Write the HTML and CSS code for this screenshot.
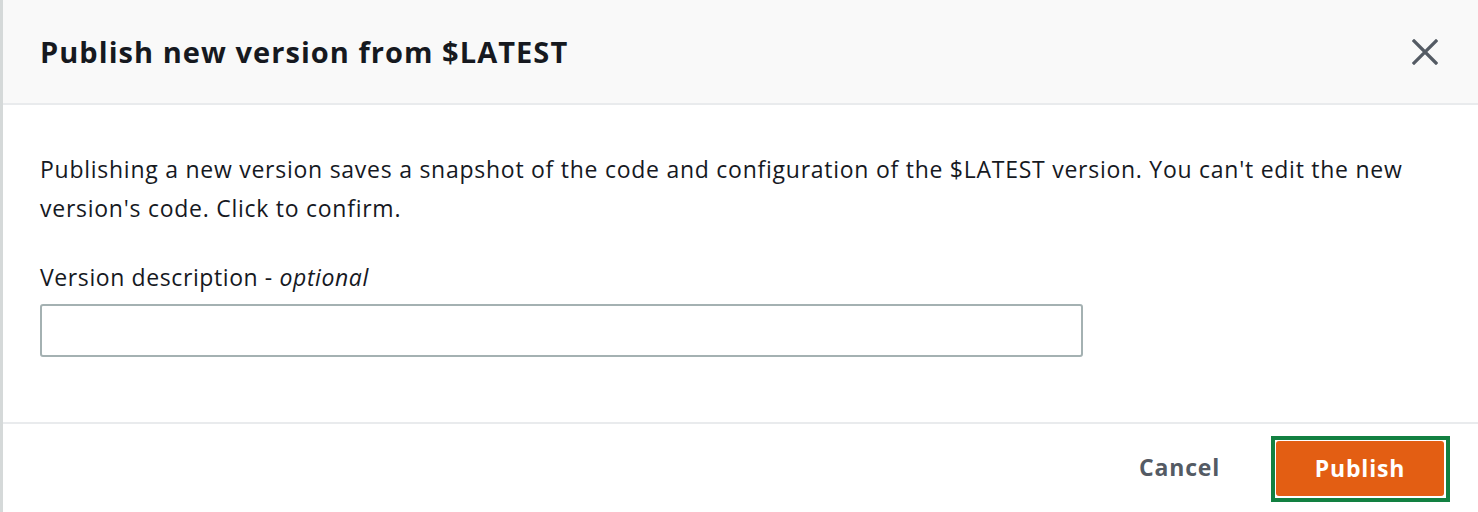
FILE: index.html
```html
<!DOCTYPE html>
<html lang="en">
<head>
<meta charset="utf-8">
<title>Publish new version</title>
<link rel="stylesheet" href="styles.css">
</head>
<body>
<div class="modal">
  <header class="modal-header">
    <h2 class="modal-title">Publish new version from $LATEST</h2>
    <button class="close-btn" aria-label="Close">
      <svg width="26" height="26" viewBox="0 0 26 26"><path d="M2 2L24 24M24 2L2 24" stroke="#545b64" stroke-width="3.2" stroke-linecap="square" fill="none"/></svg>
    </button>
  </header>
  <div class="modal-body">
    <p class="intro">Publishing a new version saves a snapshot of the code and configuration of the $LATEST version. You can't edit the new version's code. Click to confirm.</p>
    <label class="field-label" for="desc">Version description - <em>optional</em></label>
    <input class="text-input" id="desc" type="text">
  </div>
  <footer class="modal-footer">
    <button class="btn-link">Cancel</button>
    <span class="focus-ring"><button class="btn-primary">Publish</button></span>
  </footer>
</div>
</body>
</html>
```
FILE: styles.css
```css
html, body {
  margin: 0;
  padding: 0;
  background: #ffffff;
}
body {
  font-family: "Open Sans", "Noto Sans", sans-serif;
  color: #16191f;
}
.modal {
  height: 512px;
  border-left: 3px solid #d5d9d9;
  box-sizing: border-box;
  display: flex;
  flex-direction: column;
}
.modal-header {
  height: 103px;
  flex: none;
  background: #f9f9f9;
  border-bottom: 2px solid #e9ebed;
  display: flex;
  align-items: center;
  justify-content: space-between;
  padding: 0 40px 0 37px;
  box-sizing: content-box;
}
.modal-title {
  margin: 0;
  font-size: 29px;
  font-weight: 700;
  letter-spacing: 1.05px;
  line-height: 34px;
  color: #16191f;
}
.close-btn {
  border: 0;
  background: none;
  padding: 0;
  width: 26px;
  height: 26px;
  display: flex;
}
.modal-body {
  padding: 45px 40px 0 37px;
  height: 317px;
  flex: none;
  box-sizing: border-box;
  display: flex;
  flex-direction: column;
  align-items: flex-start;
}
.intro {
  margin: 0;
  font-size: 23px;
  letter-spacing: 0.74px;
  line-height: 39px;
  max-width: 1400px;
}
.field-label {
  margin-top: 32px;
  font-size: 23px;
  letter-spacing: 0.6px;
  line-height: 35px;
}
.field-label em {
  font-style: italic;
}
.text-input {
  margin-top: 9px;
  width: 1043px;
  height: 53px;
  box-sizing: border-box;
  border: 2px solid #a4b1b2;
  border-radius: 3px;
  background: #fff;
  font: inherit;
}
.modal-footer {
  border-top: 2px solid #e9ebed;
  flex: 1;
  display: flex;
  align-items: center;
  justify-content: flex-end;
  padding: 0 28px 0 0;
  gap: 51px;
}
.btn-link {
  border: 0;
  background: none;
  font-family: inherit;
  font-size: 23px;
  font-weight: 700;
  letter-spacing: 0.8px;
  color: #545b64;
  padding: 0 0 2px;
}
.focus-ring {
  display: flex;
  border: 4px solid #128041;
  padding: 1px 2px 2px 1px;
  background: #fff;
  margin-top: 1px;
}
.btn-primary {
  width: 168px;
  height: 55px;
  border: 0;
  border-radius: 3px;
  background: #e35e13;
  color: #ffffff;
  font-family: inherit;
  font-size: 23px;
  font-weight: 700;
  letter-spacing: 0.8px;
}
```
